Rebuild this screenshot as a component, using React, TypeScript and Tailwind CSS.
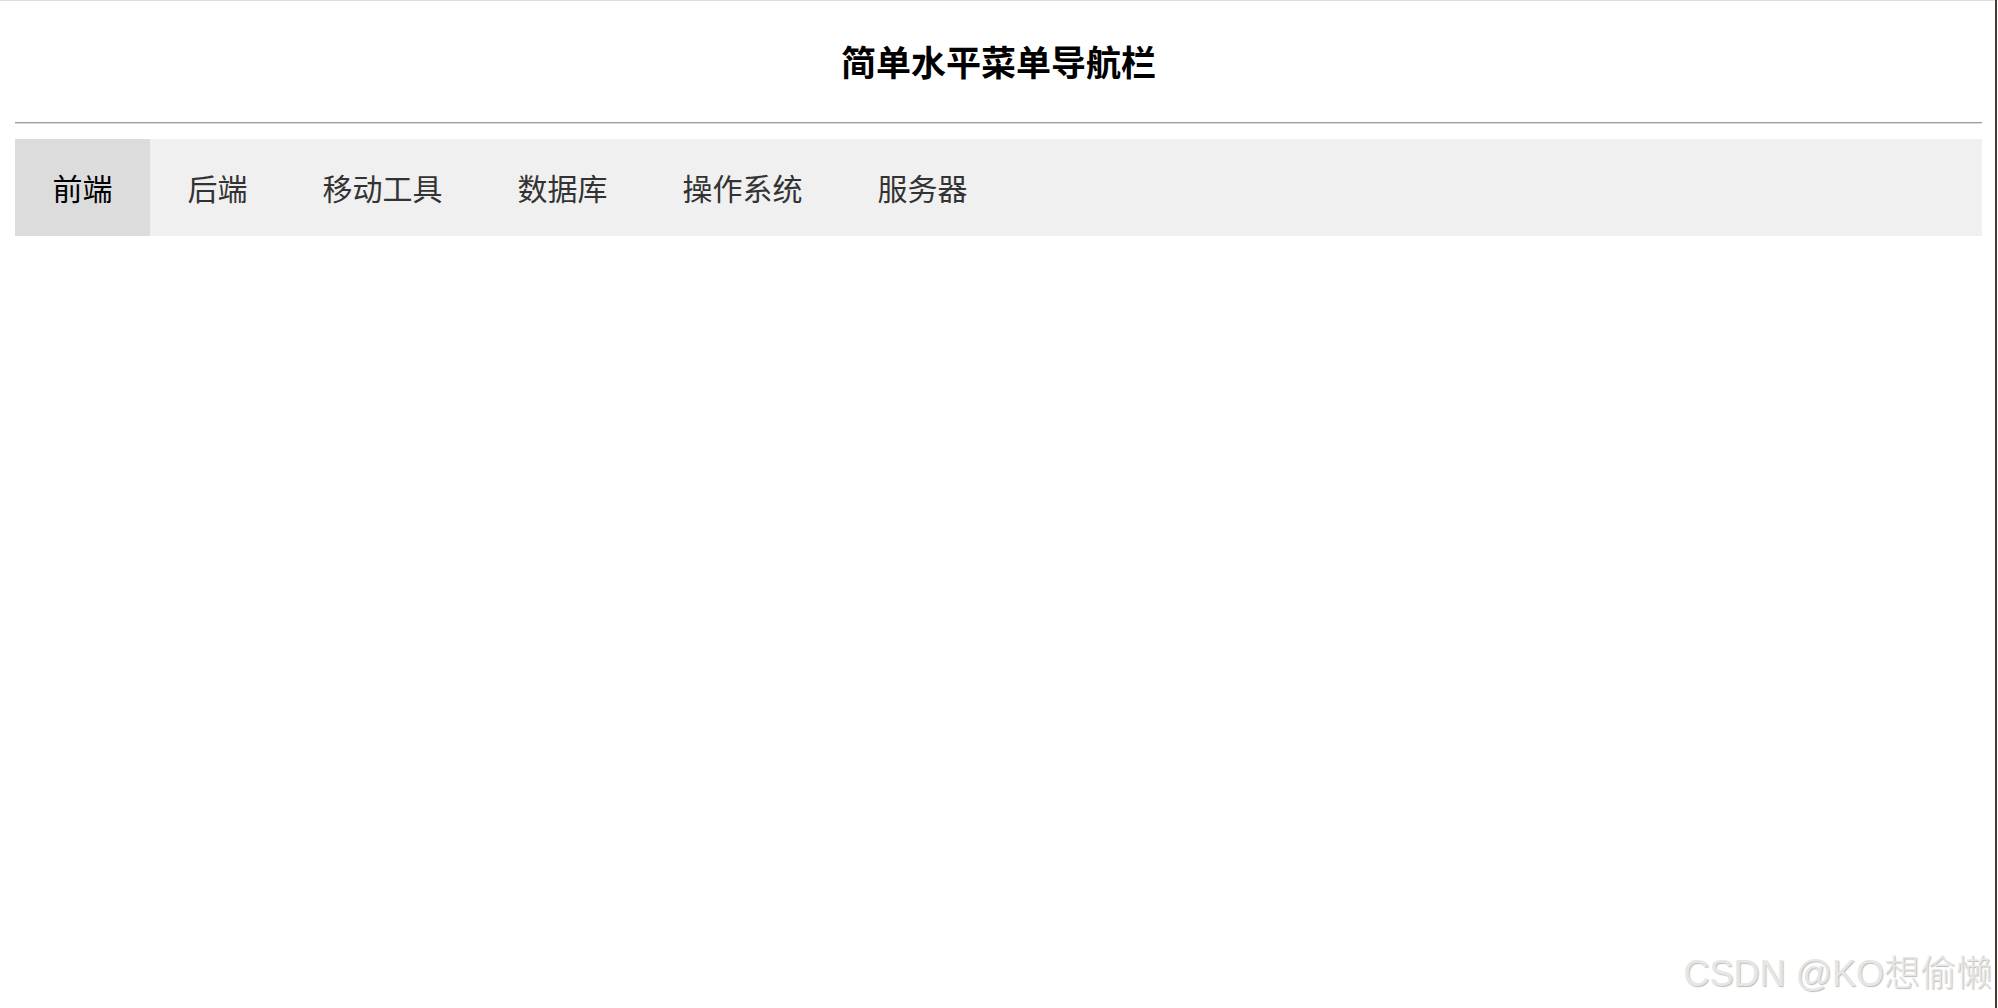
const items = ["前端", "后端", "移动工具", "数据库", "操作系统", "服务器"];

export default function App() {
  return (
    <div
      className="relative flex h-[1008px] w-[1998px] overflow-hidden bg-white"
      style={{ fontFamily: '"Noto Sans CJK SC", "Noto Sans", sans-serif' }}
    >
      <div className="flex flex-1 flex-col border-t border-[#dedede] pl-[15px] pr-[13px]">
        <div className="flex h-[121px] items-center justify-center pb-[2px]">
          <h1 className="text-[35px] leading-none font-bold text-black">简单水平菜单导航栏</h1>
        </div>
        <div className="h-[2px] border-t border-[#9e9e9e] bg-[#dcdcdc]" />
        <ul className="mt-[15px] flex h-[97px] bg-[#f0f0f0]">
          {items.map((item, i) => (
            <li
              key={item}
              className={
                i === 0
                  ? "flex items-center bg-[#dcdcdc] px-[37.5px] text-[30px] text-black"
                  : "flex items-center px-[37.5px] text-[30px] text-[#333333]"
              }
            >
              {item}
            </li>
          ))}
        </ul>
      </div>
      <div className="w-[2px] bg-[#4a3a2e]" />
      <div className="w-[1px]" />
      <div
        className="absolute right-[6px] top-[947px] text-[36px] leading-[54px] font-light text-[#e6e6e6] [text-shadow:1px_1px_1px_#bdbdbd]"
        style={{ fontFamily: '"Liberation Sans", "Noto Sans CJK SC", sans-serif' }}
      >
        CSDN @KO想偷懒
      </div>
    </div>
  );
}
